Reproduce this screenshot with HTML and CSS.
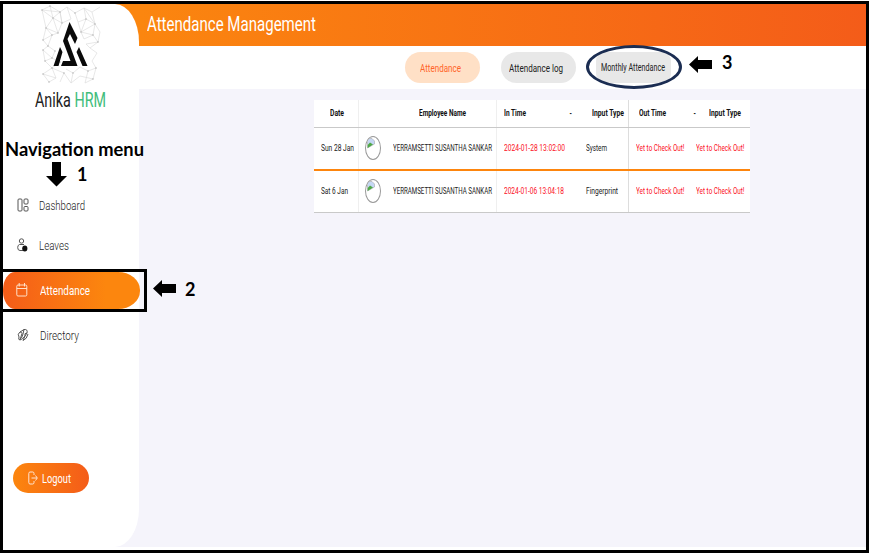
FILE: index.html
```html
<!DOCTYPE html>
<html lang="en">
<head>
<meta charset="utf-8">
<title>Attendance Management</title>
<link rel="stylesheet" href="styles.css">
</head>
<body>
<div class="app">
  <aside class="sidebar">
    <svg class="logo" width="62" height="82" viewBox="0 0 62 82">
      <g class="mesh">
        <path d="M2 6L10 2L20 8L13 14L2 6M10 2L13 14L22 19L20 8L27 3L35 9L44 4L52 8L60 3M13 14L6 24L2 6M6 24L18 29L22 19M6 24L3 36L12 31L18 29M35 9L38 18L46 15L44 4M46 15L55 20L52 8M46 15L41 28L53 31L55 20M38 18L41 28L44 35L53 31L58 38L50 44M3 36L8 42L12 31M3 46L8 42L15 47L12 54L5 57L3 46M5 57L12 64L20 58L12 54M12 64L3 70L9 78L16 74L12 64L24 69L20 78M3 70L16 74M26 65L33 69L31 79L24 69M33 69L40 63L48 67L56 64L53 75L45 79L48 67M31 79L40 72L53 75M50 44L57 49L52 57L56 64M50 44L46 40L58 38M20 8L22 19L31 15L27 3M58 38L60 28L55 20M2 6L20 8M13 14L18 29M44 4L55 20M41 28L55 20M3 46L12 54M6 24L12 31"/>
        <path class="nodes" d="M2 6h0M10 2h0M20 8h0M13 14h0M22 19h0M6 24h0M18 29h0M3 36h0M12 31h0M8 42h0M15 47h0M3 46h0M12 54h0M5 57h0M12 64h0M3 70h0M9 78h0M24 69h0M20 58h0M33 69h0M48 67h0M56 64h0M53 75h0M46 15h0M55 20h0M41 28h0M53 31h0M35 9h0M58 38h0"/>
      </g>
      <path class="mark" d="M29.500 18L37.500 34L35 40L30 30L27.500 35L37.500 62H21L23 57H30.500L23 37ZM20 43L22.500 48L18.500 62H13.500ZM39 43L47.500 62H42.500L36.500 48Z"/>
    </svg>
    <div class="brand"><span class="fit" style="--w:71px">Anika <em>HRM</em></span></div>
    <nav class="menu">
      <a class="item"><svg width="12" height="14" viewBox="0 0 12 14"><rect x="1" y="1" width="4" height="12" rx="1"/><rect x="7" y="1" width="4" height="5" rx="1"/><rect x="7" y="8.500" width="4" height="4.500" rx="1"/></svg><span class="fit" style="--w:46px">Dashboard</span></a>
      <a class="item"><svg width="12" height="16" viewBox="0 0 12 16"><circle cx="4.500" cy="4" r="2.200"/><path d="M7 7.500H2.500Q.7 8 .7 10.500Q.7 13.500 3 13.500H6"/><ellipse class="solid" cx="7.800" cy="11.500" rx="2.600" ry="3"/></svg><span class="fit" style="--w:30px">Leaves</span></a>
      <a class="item active"><svg width="12" height="14" viewBox="0 0 12 14"><rect x=".8" y="2" width="10" height="11" rx="1.200"/><path d="M.8 5.500H11M3.200 0V3.500M8.500 0V3.500"/></svg><span class="fit" style="--w:50px">Attendance</span></a>
      <a class="item"><svg width="12" height="14" viewBox="0 0 12 14"><path d="M2 9Q0 6 3 4L7 1.500Q11 1 10 5L8 8Q6 11 3 12Q1 12 2 9ZM3 4Q6 4 4.500 7L3 12M7 1.500L6 6L4.500 10M10 5Q7 5 8 8L6 12.500Q10 11 11 6"/></svg><span class="fit" style="--w:39px">Directory</span></a>
    </nav>
    <button class="logout"><svg width="10" height="14" viewBox="0 0 10 14"><path d="M6 4V2.500Q6 1 4.800 1H2Q.8 1 .8 2.500V11.500Q.8 13 2 13H4.800Q6 13 6 11.500V10M3.500 7H9M7.500 4.500L9.300 7L7.500 9.500"/></svg><span class="fit" style="--w:29px">Logout</span></button>
  </aside>
  <main class="content">
    <header class="title"><span class="fit" style="--w:169px">Attendance Management</span></header>
    <div class="tabs">
      <button class="tab selected"><span class="fit" style="--w:41px">Attendance</span></button>
      <button class="tab"><span class="fit" style="--w:54px">Attendance log</span></button>
      <button class="tab monthly"><span class="fit" style="--w:64px">Monthly Attendance</span></button>
    </div>
    <section class="table">
      <div class="row head">
        <div><span class="fit" style="--w:14px">Date</span></div>
        <div><span class="fit" style="--w:47px">Employee Name</span></div>
        <div><span class="fit" style="--w:22px">In Time</span><span class="dash">-</span></div>
        <div><span class="fit" style="--w:32px">Input Type</span></div>
        <div><span class="fit" style="--w:27px">Out Time</span><span class="dash">-</span></div>
        <div><span class="fit" style="--w:32px">Input Type</span></div>
      </div>
      <div class="row first">
        <div><span class="fit" style="--w:33px">Sun 28 Jan</span></div>
        <div><span class="avatar"><svg width="8" height="11" viewBox="0 0 8 11"><path fill="#c5d7f4" stroke="#aaa" stroke-width=".6" d="M.5.5H5L7.500 3V6L.5 10Z"/><path fill="#4fa846" d="M.7 10V7L3 4.500L6 6.500Z"/></svg></span><span class="fit" style="--w:99px">YERRAMSETTI SUSANTHA SANKAR</span></div>
        <div class="red"><span class="fit" style="--w:61px">2024-01-28 13:02:00</span></div>
        <div><span class="fit" style="--w:21px">System</span></div>
        <div class="red"><span class="fit" style="--w:48.5px">Yet to Check Out!</span></div>
        <div class="red"><span class="fit" style="--w:48.5px">Yet to Check Out!</span></div>
      </div>
      <div class="row">
        <div><span class="fit" style="--w:27px">Sat 6 Jan</span></div>
        <div><span class="avatar"><svg width="8" height="11" viewBox="0 0 8 11"><path fill="#c5d7f4" stroke="#aaa" stroke-width=".6" d="M.5.5H5L7.500 3V6L.5 10Z"/><path fill="#4fa846" d="M.7 10V7L3 4.500L6 6.500Z"/></svg></span><span class="fit" style="--w:99px">YERRAMSETTI SUSANTHA SANKAR</span></div>
        <div class="red"><span class="fit" style="--w:60px">2024-01-06 13:04:18</span></div>
        <div><span class="fit" style="--w:32px">Fingerprint</span></div>
        <div class="red"><span class="fit" style="--w:48.5px">Yet to Check Out!</span></div>
        <div class="red"><span class="fit" style="--w:48.5px">Yet to Check Out!</span></div>
      </div>
    </section>
  </main>
</div>
<div class="note nav-note"><span class="fit" style="--w:139px">Navigation menu</span></div>
<svg class="note arrow-down" width="22" height="25" viewBox="0 0 22 25"><path d="M6 0H15V14H21L10.500 24.500L0 14H6Z"/></svg>
<div class="note one">1</div>
<div class="note highlight"></div>
<svg class="note arrow-two" width="24" height="17" viewBox="0 0 24 17"><path d="M0 8.500L9 0V4H23V13H9V17Z"/></svg>
<div class="note two">2</div>
<div class="note ring"></div>
<svg class="note arrow-three" width="24" height="17" viewBox="0 0 24 17"><path d="M0 8.500L9 0V4H23V13H9V17Z"/></svg>
<div class="note three">3</div>
<script src="fit.js"></script>
</body>
</html>
```
FILE: styles.css
```css
* { box-sizing: border-box; }
body { margin: 0; width: 869px; height: 554px; overflow: hidden; position: relative; background: #fff; font-family: Roboto, sans-serif; color: #222; }
.app { margin-top: 1px; width: 869px; height: 552px; border: 3px solid #000; padding-bottom: 3px; display: grid; grid-template-columns: 136px 1fr; background: linear-gradient(#fb860f 0 42px, #fff 42px 85px, #f5f4fb 85px 543px, #fff 543px); }
.fit { display: inline-block; width: var(--w); white-space: nowrap; flex: none; }
.fit > span { display: inline-block; transform-origin: 0 50%; white-space: pre; }
button { border: 0; padding: 0; margin: 0; font: inherit; }

.sidebar { position: relative; z-index: 2; background: #fff; border-radius: 0 24px 24px 0 / 0 38px 38px 0; display: flex; flex-direction: column; }
.logo { margin-left: 37px; flex: none; }
.mesh { fill: none; stroke: #d8d8d8; stroke-width: .6; }
.mesh .nodes { stroke: #aaa; stroke-width: 1.3; stroke-linecap: round; }
.mark { fill: #0a0a0a; }
.brand { margin: 2px 0 0 32px; height: 25px; line-height: 26px; font-size: 19.500px; }
.brand em { font-style: normal; color: #42bd7c; }
.menu { display: flex; flex-direction: column; margin-top: 72px; }
.item { display: flex; align-items: center; height: 40px; padding-left: 14px; gap: 9.500px; font-size: 13.500px; font-weight: 300; line-height: 20px; }
.item svg { fill: none; stroke: #555; stroke-width: 1; flex: none; }
.item .solid { fill: #111; stroke: none; }
.item.active { margin: 7px -1px 8px 0; height: 37px; color: #fff; font-weight: 400; background: linear-gradient(90deg, #f45c19, #fc860e 75%); border-radius: 12px 22px 22px 12px / 18px; padding: 0 0 1px 13px; gap: 11.500px; }
.item.active svg { stroke: #ffe1ca; }
.item:last-child { height: 36px; gap: 10.500px; }
.logout { margin: 110px 0 0 10px; width: 76px; height: 30px; border-radius: 15px; background: linear-gradient(90deg, #fc860e, #f45c19); color: #fff; display: flex; align-items: center; padding-left: 15px; gap: 3.500px; font-size: 13.500px; line-height: 20px; }
.logout svg { fill: none; stroke: #ffe5d3; stroke-width: 1; }

.content { min-width: 0; }
.title { height: 42px; padding: 0 0 2px 8px; background: linear-gradient(90deg, #fb860f, #f45c19); color: #fff; font-size: 20px; display: flex; align-items: center; }
.tabs { height: 43px; padding: 6px 0 0 266px; display: flex; gap: 21px; }
.tab { width: 75px; height: 31px; border-radius: 16px; background: #e8e8e8; color: #222; font-size: 11.500px; display: flex; align-items: center; justify-content: center; }
.tab.selected { background: #ffe0c6; color: #ff6429; padding-right: 5px; }
.tab:nth-child(2) { padding-right: 5px; }
.tab.monthly { margin-left: -1px; padding-right: 1px; font-size: 10.500px; border-radius: 9px; }

.table { margin: 11px 0 0 175px; width: 436px; background: #fff; }
.row { display: grid; grid-template-columns: 45px 138px 82px 50px 60px 61px; height: 42px; border-bottom: 1px solid #c9c9c9; font-size: 8.500px; }
.row > div { display: flex; align-items: center; padding: 0 0 1px 7px; }
.row > div:nth-child(1) { padding-left: 6.500px; }
.row > div:nth-child(1), .row > div:nth-child(2) { border-right: 1px solid #efefef; }
.row > div:nth-child(2) { padding-left: 6px; }
.row > div:nth-child(4) { border-right: 1px solid #ddd; }
.head { height: 28px; font-weight: 700; color: #111; }
.row.head > div:nth-child(1) { padding-left: 15.500px; }
.row.head > div:nth-child(2) { padding-left: 60px; }
.row.head > div:nth-child(4) { padding-left: 12.500px; }
.row.head > div:nth-child(5) { padding-left: 10px; }
.row.head > div:nth-child(6) { padding-left: 20px; }
.head .dash { margin-left: 43px; transform: scaleX(.7); }
.head > div:nth-child(5) .dash { margin-left: 27px; }
.row.first { height: 43px; border-bottom: 2px solid #fd850d; }
.red { color: #fb1025; }
.avatar { width: 16px; height: 24px; border: 1px solid #999; border-radius: 50%; margin-right: 12px; flex: none; overflow: hidden; }
.avatar svg { display: block; margin: 1px 0 0 1px; }

.note { position: absolute; z-index: 2; font: 700 18px/22px Lato, sans-serif; color: #000; }
.nav-note { left: 5px; top: 138px; }
.arrow-down { left: 46px; top: 162px; }
.one { left: 77px; top: 163px; }
.highlight { left: 0; top: 269px; width: 147px; height: 43px; border: 3px solid #000; }
.arrow-two { left: 153px; top: 280px; }
.two { left: 185px; top: 278px; }
.ring { left: 586px; top: 45px; width: 96px; height: 44px; border: 3px solid #1b2d52; border-radius: 50%; }
.arrow-three { left: 689px; top: 56px; }
.three { left: 722px; top: 51px; }
```
FILE: fit.js
```js
// Condense each label horizontally to the width given by its --w value.
document.querySelectorAll('.fit').forEach(function (el) {
  var inner = document.createElement('span');
  while (el.firstChild) inner.appendChild(el.firstChild);
  el.appendChild(inner);
  var target = parseFloat(el.style.getPropertyValue('--w'));
  inner.style.transform = 'scaleX(' + target / inner.getBoundingClientRect().width + ')';
});
```
